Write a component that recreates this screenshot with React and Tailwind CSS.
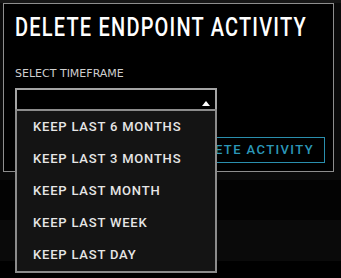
import React from "react";

const items = [
  "KEEP LAST 6 MONTHS",
  "KEEP LAST 3 MONTHS",
  "KEEP LAST MONTH",
  "KEEP LAST WEEK",
  "KEEP LAST DAY",
];

export default function App() {
  return (
    <div className="relative w-[341px] h-[278px] overflow-hidden bg-black" style={{ fontFamily: "Roboto, 'Liberation Sans', sans-serif" }}>
      {/* background table rows */}
      <div className="flex flex-col">
        <div className="-mt-[12px] h-[15px] bg-[#161616] flex items-center text-[13px] text-[#6a6a6a] font-medium">
          <span className="ml-[5px] w-[121px]">2023-03-22 14:57</span>
          <span className="w-[122px]">default</span>
          <span>default</span>
        </div>
        <div className="h-[169px] bg-[#0a0a0a]" />
        <div className="h-[8px] bg-[#0a0a0a]" />
        <div className="h-[40px] bg-[#030303]" />
        <div className="h-[41px] bg-[#0a0a0a]" />
        <div className="h-[17px] bg-black" />
      </div>

      {/* modal */}
      <div className="absolute left-[3px] top-[3px] w-[331px] h-[169px] border border-[#8e8e8e] bg-black pl-[11px] pr-[8px] flex flex-col">
        <div
          className="mt-[9px] text-[25px] leading-[30px] text-white font-medium tracking-[1.5px] whitespace-nowrap origin-left scale-x-[0.8]"
          style={{ fontFamily: "Roboto, sans-serif" }}
        >
          DELETE ENDPOINT ACTIVITY
        </div>
        <div
          className="mt-[24px] text-[11px] leading-[13px] text-[#cfcfcf] whitespace-nowrap"
          style={{ fontFamily: "'DejaVu Sans', sans-serif" }}
        >
          SELECT TIMEFRAME
        </div>
        <div className="mt-[8px] w-[202px] h-[23px] border-2 border-[#a4a4a4] relative">
          <div className="absolute right-[5px] bottom-[3px] w-0 h-0 border-l-[4px] border-r-[4px] border-b-[5px] border-l-transparent border-r-transparent border-b-white" />
        </div>
        <div className="mt-[26px] flex justify-end">
          <button className="h-[26px] px-[10px] border border-[#2a8fae] text-[#2b97b8] text-[13px] font-medium tracking-[1.4px]">
            DELETE ACTIVITY
          </button>
        </div>
      </div>

      {/* dropdown */}
      <div className="absolute left-[15px] top-[109px] w-[202px] h-[164px] bg-[#141414] border-2 border-[#8c8c8c] flex flex-col">
        {items.map((t) => (
          <div key={t} className="h-[32px] flex items-center pl-[16px] text-[13px] font-medium text-[#e6e6e6] tracking-[0.8px]">
            {t}
          </div>
        ))}
      </div>
    </div>
  );
}
